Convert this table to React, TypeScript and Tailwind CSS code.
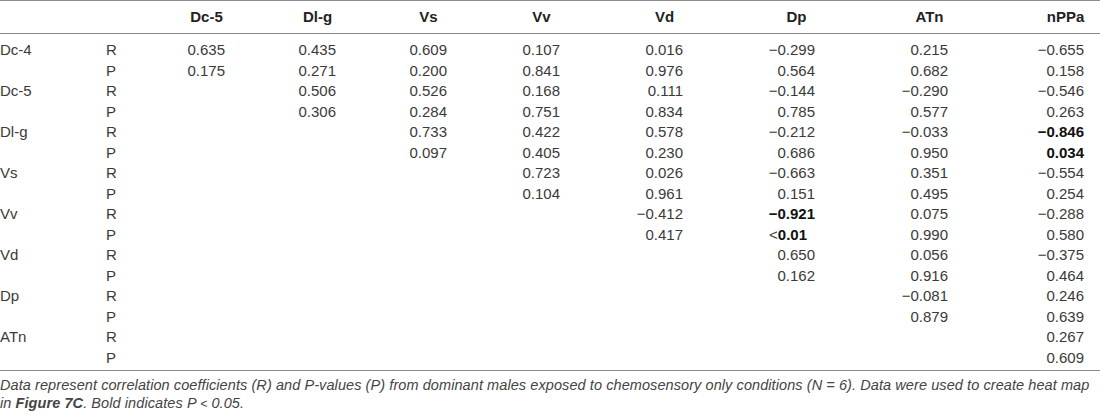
import React from 'react';

type Cell = { v: string; bold?: boolean; lt?: boolean } | null;

const cols = [
  { name: 'Dc-5', cls: 'w-[112px] pl-[38px]' },
  { name: 'Dl-g', cls: 'w-[111px] pl-[37px]' },
  { name: 'Vs', cls: 'w-[112px] pl-[37px]' },
  { name: 'Vv', cls: 'w-[118px] pl-[38px]' },
  { name: 'Vd', cls: 'w-[128px] pl-[43px]' },
  { name: 'Dp', cls: 'w-[132px] pl-[47px]' },
  { name: 'ATn', cls: 'w-[135px] pl-[48px]' },
  { name: 'nPPa', cls: 'w-[102px] pl-[49px]' },
];

const c = (v: string, bold = false): Cell => ({ v, bold });
const n = null;

const rows: { label: string; kind: string; cells: Cell[] }[] = [
  { label: 'Dc-4', kind: 'R', cells: ['0.635', '0.435', '0.609', '0.107', '0.016', '−0.299', '0.215', '−0.655'].map((v) => c(v)) },
  { label: '', kind: 'P', cells: ['0.175', '0.271', '0.200', '0.841', '0.976', '0.564', '0.682', '0.158'].map((v) => c(v)) },
  { label: 'Dc-5', kind: 'R', cells: [n, c('0.506'), c('0.526'), c('0.168'), c('0.111'), c('−0.144'), c('−0.290'), c('−0.546')] },
  { label: '', kind: 'P', cells: [n, c('0.306'), c('0.284'), c('0.751'), c('0.834'), c('0.785'), c('0.577'), c('0.263')] },
  { label: 'Dl-g', kind: 'R', cells: [n, n, c('0.733'), c('0.422'), c('0.578'), c('−0.212'), c('−0.033'), c('−0.846', true)] },
  { label: '', kind: 'P', cells: [n, n, c('0.097'), c('0.405'), c('0.230'), c('0.686'), c('0.950'), c('0.034', true)] },
  { label: 'Vs', kind: 'R', cells: [n, n, n, c('0.723'), c('0.026'), c('−0.663'), c('0.351'), c('−0.554')] },
  { label: '', kind: 'P', cells: [n, n, n, c('0.104'), c('0.961'), c('0.151'), c('0.495'), c('0.254')] },
  { label: 'Vv', kind: 'R', cells: [n, n, n, n, c('−0.412'), c('−0.921', true), c('0.075'), c('−0.288')] },
  { label: '', kind: 'P', cells: [n, n, n, n, c('0.417'), { v: '0.01', bold: true, lt: true }, c('0.990'), c('0.580')] },
  { label: 'Vd', kind: 'R', cells: [n, n, n, n, n, c('0.650'), c('0.056'), c('−0.375')] },
  { label: '', kind: 'P', cells: [n, n, n, n, n, c('0.162'), c('0.916'), c('0.464')] },
  { label: 'Dp', kind: 'R', cells: [n, n, n, n, n, n, c('−0.081'), c('0.246')] },
  { label: '', kind: 'P', cells: [n, n, n, n, n, n, c('0.879'), c('0.639')] },
  { label: 'ATn', kind: 'R', cells: [n, n, n, n, n, n, n, c('0.267')] },
  { label: '', kind: 'P', cells: [n, n, n, n, n, n, n, c('0.609')] },
];

export default function App() {
  return (
    <div className="w-[1100px] h-[420px] bg-white text-[#3a3a3a] font-['Liberation_Sans',Arial,sans-serif] overflow-hidden">
      {/* header */}
      <div className="flex h-[34px] items-center border-t border-b border-[#8c8c8c] text-[15px] font-bold text-[#222]">
        <div className="w-[106px]" />
        <div className="w-[44px]" />
        {cols.map((col) => (
          <div key={col.name} className={col.cls}>
            <div className="w-[37px] flex justify-center whitespace-nowrap">{col.name}</div>
          </div>
        ))}
      </div>

      {/* body */}
      <div className="pt-[6px] pb-[2px] border-b border-[#8c8c8c] text-[15px]">
        {rows.map((row, i) => (
          <div key={i} className="flex h-[20.5px] items-center">
            <div className="w-[106px]">{row.label}</div>
            <div className="w-[44px]">{row.kind}</div>
            {row.cells.map((cell, j) => (
              <div key={j} className={cols[j].cls}>
                <div className="w-[37px] flex justify-end whitespace-nowrap">
                  {cell &&
                    (cell.lt ? (
                      <span className="pr-[8px]">
                        <span>&lt;</span>
                        <span className="font-bold text-[#111]">{cell.v}</span>
                      </span>
                    ) : (
                      <span className={cell.bold ? 'font-bold text-[#111]' : ''}>{cell.v}</span>
                    ))}
                </div>
              </div>
            ))}
          </div>
        ))}
      </div>

      {/* footnote */}
      <p className="pt-[6px] text-[14.5px] leading-[17.5px] italic text-[#444] tracking-[0.08px] whitespace-nowrap">
        Data represent correlation coefficients (R) and P-values (P) from dominant males exposed to chemosensory only
        conditions (N = 6). Data were used to create heat map
        <br />
        in <span className="font-bold">Figure 7C</span>. Bold indicates P <span className="text-[12px]">&lt;</span> 0.05.
      </p>
    </div>
  );
}
